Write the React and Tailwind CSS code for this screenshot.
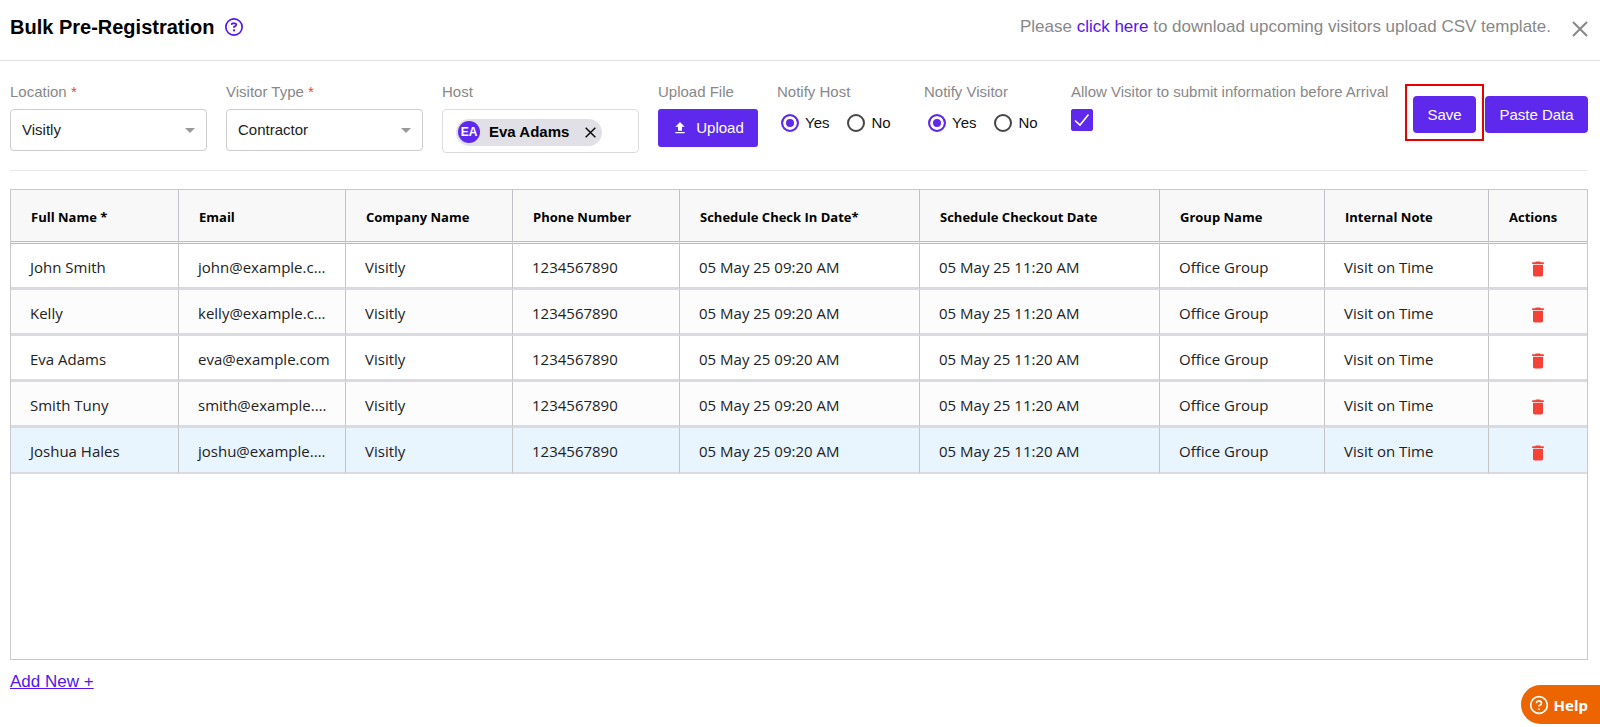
import { useState } from 'react';
import { FaRegCircleQuestion } from 'react-icons/fa6';
import { MdArrowDropDown, MdDelete, MdUpload } from 'react-icons/md';
import { CircleQuestionMark } from 'lucide-react';

const COLUMNS = [
  { key: 'name', label: 'Full Name *', width: 'w-[168px]' },
  { key: 'email', label: 'Email', width: 'w-[167px]' },
  { key: 'company', label: 'Company Name', width: 'w-[167px]' },
  { key: 'phone', label: 'Phone Number', width: 'w-[167px]' },
  { key: 'checkIn', label: 'Schedule Check In Date*', width: 'w-[240px]' },
  { key: 'checkOut', label: 'Schedule Checkout Date', width: 'w-[240px]' },
  { key: 'group', label: 'Group Name', width: 'w-[165px]' },
  { key: 'note', label: 'Internal Note', width: 'w-[164px]' },
];

const makeVisitor = (id, name, email) => ({
  id,
  name,
  email,
  company: 'Visitly',
  phone: '1234567890',
  checkIn: '05 May 25 09:20 AM',
  checkOut: '05 May 25 11:20 AM',
  group: 'Office Group',
  note: 'Visit on Time',
});

const INITIAL_VISITORS = [
  makeVisitor(1, 'John Smith', 'john@example.com'),
  makeVisitor(2, 'Kelly', 'kelly@example.com'),
  makeVisitor(3, 'Eva Adams', 'eva@example.com'),
  makeVisitor(4, 'Smith Tuny', 'smith@example.com'),
  makeVisitor(5, 'Joshua Hales', 'joshu@example.com'),
];

function CrossIcon({ className }) {
  return (
    <svg viewBox="0 0 16 16" fill="none" stroke="currentColor" className={className} aria-hidden="true">
      <path d="M1 1L15 15M15 1L1 15" />
    </svg>
  );
}

function SelectField({ id, label, value, onChange, options }) {
  return (
    <div className="w-[197px]">
      <label htmlFor={id} className="mb-[7px] block text-[#888888]">
        {label} <span className="text-[#f44336]">*</span>
      </label>
      <div className="relative">
        <select
          id={id}
          value={value}
          onChange={(e) => onChange(e.target.value)}
          className="h-[42px] w-full appearance-none rounded border border-[#cccccc] bg-white pr-8 pl-[11px] text-[#222222] outline-none focus:border-[#5e29ec]"
        >
          {options.map((option) => (
            <option key={option}>{option}</option>
          ))}
        </select>
        <MdArrowDropDown className="pointer-events-none absolute top-1/2 right-[5px] h-6 w-6 -translate-y-1/2 text-[#999999]" />
      </div>
    </div>
  );
}

function YesNoField({ name, label, value, onChange }) {
  return (
    <fieldset className="w-[128px]">
      <legend className="text-[#888888]">{label}</legend>
      <div className="flex gap-[18px] pt-[9px] pl-1">
        {['Yes', 'No'].map((option) => (
          <label key={option} className="flex h-6 items-center gap-[6px]">
            <input
              type="radio"
              name={name}
              value={option}
              checked={value === option}
              onChange={() => onChange(option)}
              className="h-[18px] w-[18px] appearance-none rounded-full border-2 border-[#444444] checked:border-[#5e29ec] checked:bg-[#5e29ec] checked:shadow-[inset_0_0_0_3px_#ffffff]"
            />
            {option}
          </label>
        ))}
      </div>
    </fieldset>
  );
}

export default function App() {
  const [location, setLocation] = useState('Visitly');
  const [visitorType, setVisitorType] = useState('Contractor');
  const [host, setHost] = useState('Eva Adams');
  const [notifyHost, setNotifyHost] = useState('Yes');
  const [notifyVisitor, setNotifyVisitor] = useState('Yes');
  const [allowSubmit, setAllowSubmit] = useState(true);
  const [visitors, setVisitors] = useState(INITIAL_VISITORS);
  const [selectedId, setSelectedId] = useState(5);

  const removeVisitor = (id) => {
    setVisitors((prev) => prev.filter((visitor) => visitor.id !== id));
  };

  const addVisitor = (e) => {
    e.preventDefault();
    setVisitors((prev) => [...prev, { id: Date.now() }]);
  };

  return (
    <main className="flex min-h-screen flex-col bg-white font-['Liberation_Sans',Arial,sans-serif] text-[15px] leading-5 text-[#111111]">
      <header className="flex items-center justify-between border-b border-[#e3e3e3] pt-[7px] pr-3 pb-[13px] pl-2.5">
        <div className="flex items-center gap-[11px]">
          <h1 className="text-[20px] leading-10 font-bold text-black">Bulk Pre-Registration</h1>
          <button type="button" aria-label="About bulk pre-registration" className="text-[#5314f0]">
            <FaRegCircleQuestion className="h-[18px] w-[18px]" />
          </button>
        </div>
        <div className="flex items-center gap-[21px]">
          <p className="text-[17px] leading-10 text-[#888888]">
            Please <a href="#template" className="text-[#5314f0]">click here</a> to download upcoming visitors upload CSV
            template.
          </p>
          <button type="button" aria-label="Close" className="pt-1 text-[#888888]">
            <CrossIcon className="h-4 w-4 stroke-2" />
          </button>
        </div>
      </header>

      <div className="flex flex-1 flex-col pr-3 pl-2.5">
        <form
          onSubmit={(e) => e.preventDefault()}
          className="flex items-start justify-between border-b border-[#e8e8e8] pt-[21px] pb-[17px]"
        >
          <div className="flex flex-wrap items-start gap-x-[19px] gap-y-4">
            <SelectField
              id="location"
              label="Location"
              value={location}
              onChange={setLocation}
              options={['Visitly']}
            />
            <SelectField
              id="visitor-type"
              label="Visitor Type"
              value={visitorType}
              onChange={setVisitorType}
              options={['Contractor', 'Visitor', 'Vendor']}
            />

            {/* Host */}
            <div className="w-[197px]">
              <label htmlFor="host" className="mb-[7px] block text-[#888888]">
                Host
              </label>
              <div className="flex h-11 items-center rounded border border-[#dddddd] pt-[2px] pr-2 pl-[13px]">
                {host && (
                  <span className="flex h-[27px] shrink-0 items-center rounded-full bg-[#e0e0e6] pr-[6px] pl-[2px] font-bold text-black">
                    <span className="flex h-[22px] w-[22px] items-center justify-center rounded-full bg-[#5e29ec] text-[12px] text-white">
                      EA
                    </span>
                    <span className="mr-4 ml-[9px]">{host}</span>
                    <button type="button" aria-label={`Remove ${host}`} onClick={() => setHost('')}>
                      <CrossIcon className="h-[11px] w-[11px] stroke-2" />
                    </button>
                  </span>
                )}
                <input id="host" type="text" className="w-0 min-w-0 flex-1 outline-none" />
              </div>
            </div>

            {/* Upload */}
            <div>
              <span className="mb-[7px] block text-[#888888]">Upload File</span>
              <button
                type="button"
                className="flex h-[38px] w-[100px] items-center justify-center gap-2 rounded-[3px] bg-[#5e29ec] text-white"
              >
                <MdUpload className="h-4 w-4" />
                Upload
              </button>
            </div>

            <YesNoField name="notify-host" label="Notify Host" value={notifyHost} onChange={setNotifyHost} />
            <YesNoField
              name="notify-visitor"
              label="Notify Visitor"
              value={notifyVisitor}
              onChange={setNotifyVisitor}
            />

            <div>
              <label htmlFor="allow-submit" className="mb-[7px] block text-[#888888]">
                Allow Visitor to submit information before Arrival
              </label>
              <div className="relative h-[22px] w-[22px]">
                <input
                  id="allow-submit"
                  type="checkbox"
                  checked={allowSubmit}
                  onChange={(e) => setAllowSubmit(e.target.checked)}
                  className="block h-[22px] w-[22px] appearance-none rounded-[2px] border border-[#5e29ec] checked:bg-[#5e29ec]"
                />
                <svg
                  viewBox="0 0 22 22"
                  fill="none"
                  stroke="#ffffff"
                  strokeWidth="1.6"
                  className="pointer-events-none absolute inset-0"
                  aria-hidden="true"
                >
                  <path d="M4 11.5L9 16L17.5 5.5" />
                </svg>
              </div>
            </div>
          </div>

          <div className="mt-[2px] flex shrink-0 items-center gap-px">
            <div className="border-2 border-[#e60000] px-[6px] pt-[10px] pb-[6px]">
              <button type="submit" className="block h-[37px] w-[63px] rounded bg-[#5e29ec] text-white">
                Save
              </button>
            </div>
            <button type="button" className="mt-1 h-[37px] w-[103px] rounded bg-[#5e29ec] text-white">
              Paste Data
            </button>
          </div>
        </form>

        <div className="mt-[18px] flex-1 border border-[#c8c8cd]">
          <table className="w-full table-fixed border-separate border-spacing-0 font-['Open_Sans','Noto_Sans',sans-serif]">
            <thead>
              <tr className="bg-[#f8f8f8] text-left text-[13px] text-black">
                {COLUMNS.map((column) => (
                  <th
                    key={column.key}
                    className={`${column.width} h-[54px] border-r border-b-3 border-r-[#c2c2c7] border-b-[#bcbcc2] [border-bottom-style:double] pt-[2px] pl-5 font-bold`}
                  >
                    {column.label}
                  </th>
                ))}
                <th className="w-[98px] border-b-3 border-b-[#bcbcc2] [border-bottom-style:double] pt-[2px] pl-5 font-bold">
                  Actions
                </th>
              </tr>
            </thead>
            <tbody className="[&>tr:last-child>td]:border-b-2">
              {visitors.map((visitor) => (
                <tr
                  key={visitor.id}
                  onClick={() => setSelectedId(visitor.id)}
                  className={visitor.id === selectedId ? 'bg-[#e8f4fe]' : 'bg-white even:bg-[#fcfcfc]'}
                >
                  {COLUMNS.map((column) => (
                    <td
                      key={column.key}
                      className="h-[46px] truncate border-r border-b-3 border-r-[#c4c4c4] border-b-[#d9dbde] pt-[2px] pr-[14px] pl-[19px] text-[#222222]"
                    >
                      {visitor[column.key]}
                    </td>
                  ))}
                  <td className="border-b-3 border-b-[#d9dbde]">
                    <button
                      type="button"
                      aria-label="Delete visitor"
                      onClick={() => removeVisitor(visitor.id)}
                      className="mx-auto block pt-[6px] text-[#f44336]"
                    >
                      <MdDelete className="h-5 w-5" />
                    </button>
                  </td>
                </tr>
              ))}
            </tbody>
          </table>
        </div>

        <div className="pt-3 pb-[35px]">
          <a href="#add" onClick={addVisitor} className="text-[17px] text-[#5314f0] underline">
            Add New +
          </a>
        </div>
      </div>

      <button
        type="button"
        className="fixed right-0 bottom-[3px] flex h-[39px] items-center gap-[5px] rounded-l-full rounded-br-lg bg-[#ed6500] pr-3 pl-2 font-['Noto_Sans',sans-serif] font-bold text-white"
      >
        <CircleQuestionMark className="h-5 w-5" strokeWidth={2} />
        Help
      </button>
    </main>
  );
}
